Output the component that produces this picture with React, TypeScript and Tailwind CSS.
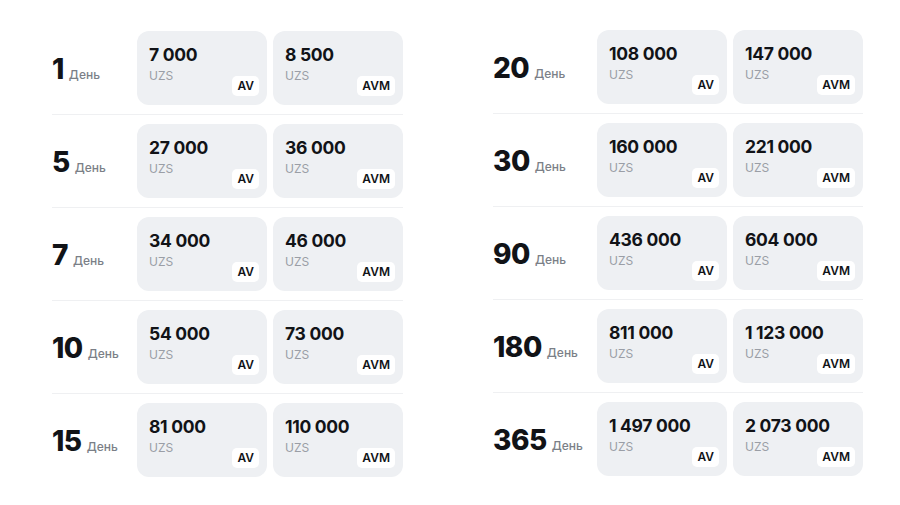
type Row = { days: number; av: string; avm: string };

const left: Row[] = [
    { days: 1, av: "7 000", avm: "8 500" },
    { days: 5, av: "27 000", avm: "36 000" },
    { days: 7, av: "34 000", avm: "46 000" },
    { days: 10, av: "54 000", avm: "73 000" },
    { days: 15, av: "81 000", avm: "110 000" },
];

const right: Row[] = [
    { days: 20, av: "108 000", avm: "147 000" },
    { days: 30, av: "160 000", avm: "221 000" },
    { days: 90, av: "436 000", avm: "604 000" },
    { days: 180, av: "811 000", avm: "1 123 000" },
    { days: 365, av: "1 497 000", avm: "2 073 000" },
];

const PriceCard: React.FC<{ price: string; tag: string }> = ({ price, tag }) => (
    <div className="relative w-[130px] h-[74px] rounded-xl bg-[#eef0f3] px-3 pt-[13px]">
        <div className="text-[17.5px] leading-[22px] font-bold text-[#111317] tracking-[-0.3px]">{price}</div>
        <div className="text-[12px] leading-[14px] text-[#9a9ea6] mt-[3px]">UZS</div>
        <span className="absolute right-[8px] bottom-[9px] h-[20px] px-[5px] flex items-center rounded-[5px] bg-white text-[12px] font-semibold text-[#111317]">
            {tag}
        </span>
    </div>
);

const Column: React.FC<{ rows: Row[]; labelWidth: string }> = ({ rows, labelWidth }) => (
    <div className="flex flex-col">
        {rows.map((row, i) => (
            <div
                key={row.days}
                className={`flex items-center py-[9px] ${i < rows.length - 1 ? "border-b border-[#eff0f2]" : ""}`}
            >
                <div className={`flex items-baseline gap-[5px] pt-[3px] ${labelWidth}`}>
                    <span className="text-[28px] leading-none font-extrabold text-[#111317] tracking-[-0.5px]">{row.days}</span>
                    <span className="text-[12px] font-medium text-[#7b7f87]">День</span>
                </div>
                <div className="flex gap-[6px]">
                    <PriceCard price={row.av} tag="AV" />
                    <PriceCard price={row.avm} tag="AVM" />
                </div>
            </div>
        ))}
    </div>
);

export default function App() {
    return (
        <div
            className="w-[900px] h-[505px] bg-white flex items-start gap-[90px] pl-[52px] pt-[22px]"
            style={{ fontFamily: "Inter, 'Noto Sans', sans-serif" }}
        >
            <Column rows={left} labelWidth="w-[85px]" />
            <div className="-mt-px">
                <Column rows={right} labelWidth="w-[104px]" />
            </div>
        </div>
    );
}
